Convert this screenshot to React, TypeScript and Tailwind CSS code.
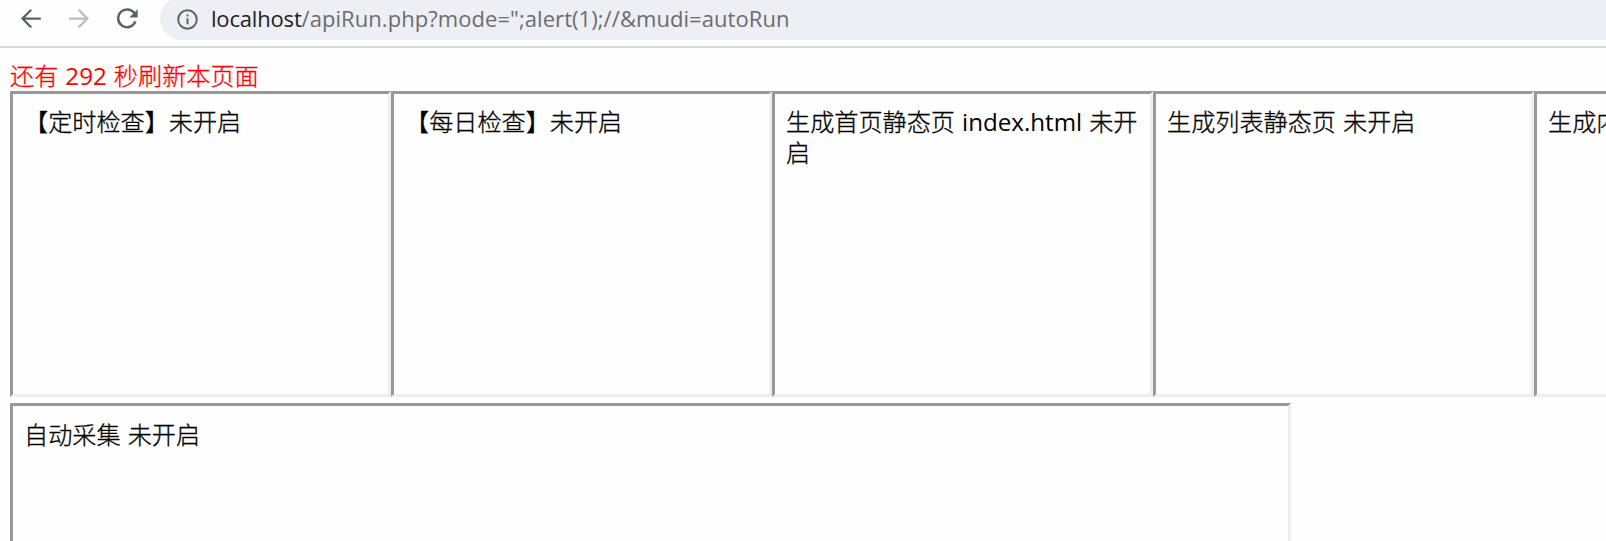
import React from "react";

type FrameProps = { children: React.ReactNode; className: string };

function Frame({ children, className }: FrameProps) {
  return (
    <div
      className={`shrink-0 border-[3px] border-t-[#999] border-r-[#eeeef0] border-b-[#eeeef0] border-l-[#999] pr-2 pl-[11px] ${className}`}
    >
      {children}
    </div>
  );
}

function Latin({ children }: { children: React.ReactNode }) {
  return <span className="font-normal [-webkit-text-stroke:0px]">{children}</span>;
}

const stroke = { fill: "none", strokeWidth: 2.2 };

export default function App() {
  return (
    <div className="h-[541px] w-full overflow-hidden bg-[#fefefe] font-['Open_Sans','Noto_Sans_CJK_SC',sans-serif] text-[24.15px] leading-[31px] font-light [word-spacing:0.8px] text-black">
      <header className="flex h-12 items-start overflow-hidden border-b-2 border-[#dadada] bg-[#fefefe] pl-[20px]">
        <svg className="mt-[8px] h-[22px] w-[22px] shrink-0" viewBox="0 0 22 22" stroke="#5f6368" {...stroke}>
          <path d="M20.8 10.6H3M11.2 1.8 2.4 10.6l8.8 8.8" />
        </svg>
        <svg className="mt-[8px] ml-[26px] h-[22px] w-[22px] shrink-0" viewBox="0 0 22 22" stroke="#babcbe" {...stroke}>
          <path d="M1 10.6h17.8M10.6 1.8l8.8 8.8-8.8 8.8" />
        </svg>
        <svg className="mt-[8px] ml-[26px] h-[22px] w-[22px] shrink-0" viewBox="0 0 22 22" stroke="#5f6368" {...stroke} strokeWidth={2.5}>
          <path d="M18.6 5.6A8.9 8.9 0 1 0 19.4 13.4" />
          <path d="M21.7 1.2v8.4h-8.4z" fill="#5f6368" stroke="none" />
        </svg>
        <div className="-mt-[3px] ml-[22px] flex h-[43px] flex-1 items-start rounded-l-full bg-[#eeeff5] pl-[17px]">
          <svg className="mt-[12px] h-[21px] w-[21px] shrink-0" viewBox="0 0 21 21" fill="none" stroke="#5f6368" strokeWidth="2">
            <circle cx="10.5" cy="10.5" r="9.3" />
            <path d="M10.5 9.3v6M10.5 5.4v2.2" />
          </svg>
          <span className="mt-[6px] ml-[13px] text-[22px] leading-[31px] font-normal tracking-[0.06px] whitespace-nowrap text-[#6b6c70]">
            <span className="tracking-[-0.18px] text-[#1f2023]">localhost</span>/apiRun.php?mode=";alert(1);//&amp;mudi=autoRun
          </span>
        </div>
      </header>
      <main className="pt-3 pl-[10px] [-webkit-text-stroke:0.3px]">
        <p className="h-[31px] text-[#ff0000]">
          还有 <Latin>292</Latin> 秒刷新本页面
        </p>
        <div className="flex">
          <Frame className="h-[306px] w-[381px] pt-3">【定时检查】未开启</Frame>
          <Frame className="h-[306px] w-[381px] pt-3">【每日检查】未开启</Frame>
          <Frame className="h-[306px] w-[381px] pt-3">
            生成首页静态页 <Latin>index.html</Latin> 未开启
          </Frame>
          <Frame className="h-[306px] w-[381px] pt-3">生成列表静态页 未开启</Frame>
          <Frame className="h-[306px] w-[381px] pt-3 whitespace-nowrap">生成内容静态页 未开启</Frame>
        </div>
        <Frame className="mt-[6px] h-[306px] w-[1281px] pt-[13px]">自动采集 未开启</Frame>
      </main>
    </div>
  );
}
